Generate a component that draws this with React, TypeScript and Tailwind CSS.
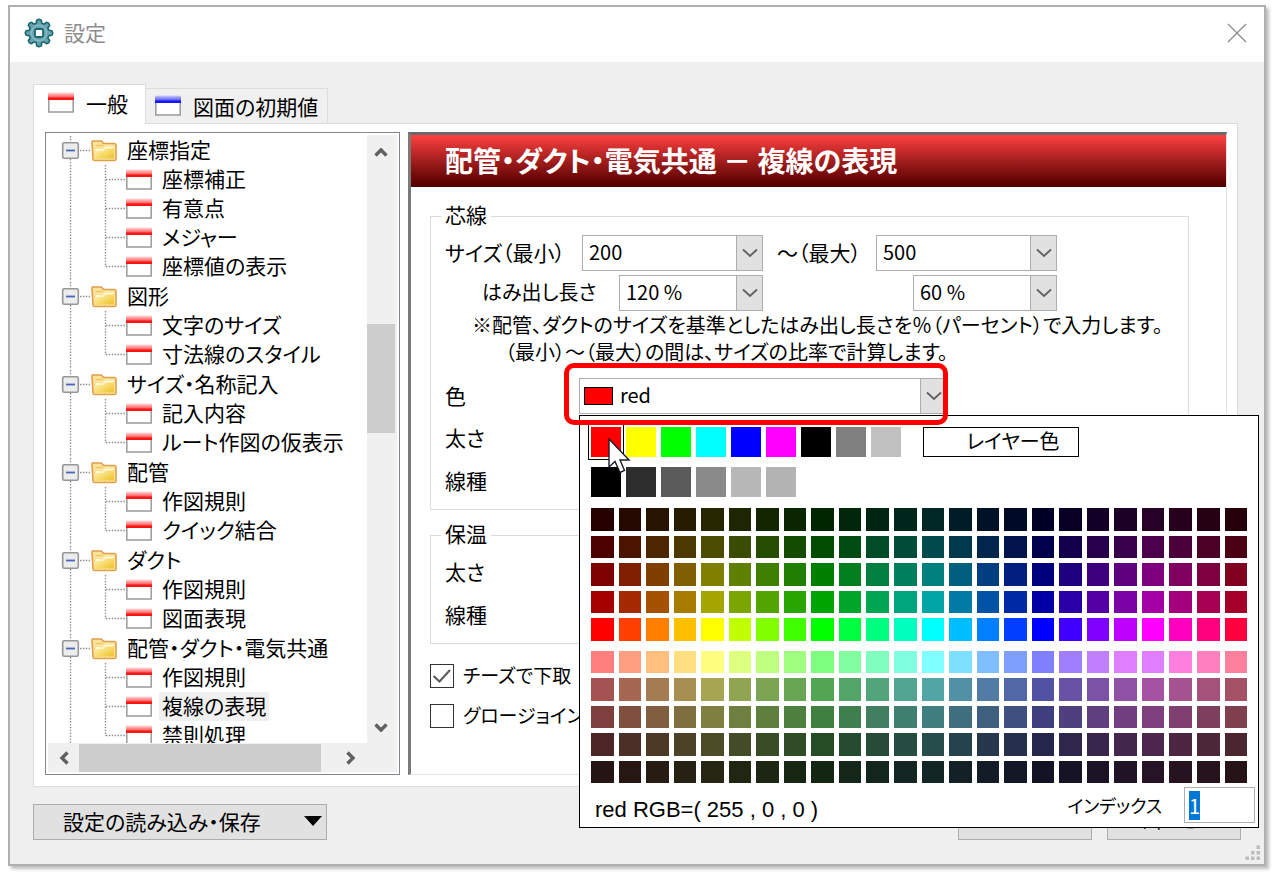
import { useEffect, useRef } from "react";

type Group = { name: string; items: string[] };

const TREE: Group[] = [
  { name: "座標指定", items: ["座標補正", "有意点", "メジャー", "座標値の表示"] },
  { name: "図形", items: ["文字のサイズ", "寸法線のスタイル"] },
  { name: "サイズ・名称記入", items: ["記入内容", "ルート作図の仮表示"] },
  { name: "配管", items: ["作図規則", "クイック結合"] },
  { name: "ダクト", items: ["作図規則", "図面表現"] },
  { name: "配管・ダクト・電気共通", items: ["作図規則", "複線の表現", "禁則処理"] },
];
const SELECTED = "複線の表現";

const BASIC = ["#ff0000", "#ffff00", "#00ff00", "#00ffff", "#0000ff", "#ff00ff", "#000000", "#808080", "#c0c0c0"];
const GRAYS = ["#000000", "#2d2d2d", "#5b5b5b", "#898989", "#b7b7b7", "#b3b3b3"];

/** Colour of one palette cell: hue in degrees, brightest and darkest channel. */
function cellColor(hue: number, max: number, min: number): string {
  const channel = (shift: number) => {
    const k = (shift + hue / 60) % 6;
    const t = Math.max(0, Math.min(k, 4 - k, 1));
    return Math.floor(max - (max - min) * t);
  };
  return `rgb(${channel(5)}, ${channel(3)}, ${channel(1)})`;
}

const HUES = Array.from({ length: 24 }, (_, i) => i * 15);
const VIVID = [38, 76, 127, 165, 255].flatMap((v) => HUES.map((h) => cellColor(h, v, 0)));
const MUTED = [255, 165, 127, 76, 38].flatMap((v) =>
  HUES.map((h) => (v === 255 && h === 300 ? "#df7fff" : cellColor(h, v, v / 2)))
);

function CardIcon({ blue = false }: { blue?: boolean }) {
  const id = blue ? "card-blue" : "card-red";
  const main = blue ? "#1414ff" : "#ff1414";
  return (
    <svg width="26" height="22" viewBox="0 0 26 22" className="shrink-0" aria-hidden="true">
      <defs>
        <linearGradient id={id} x1="0" y1="0" x2="0" y2="1">
          <stop offset="0" stopColor={main} stopOpacity="0.15" />
          <stop offset="0.65" stopColor={main} stopOpacity="0.7" />
          <stop offset="0.75" stopColor={main} />
        </linearGradient>
      </defs>
      <rect x="0.8" y="6" width="24.4" height="14" fill="#fff" stroke="#a0a0a0" strokeWidth="1.6" />
      <rect x="0" y="0.5" width="26" height="7.5" fill={`url(#${id})`} />
    </svg>
  );
}

function FolderIcon() {
  return (
    <svg width="26" height="24" viewBox="0 0 26 24" className="shrink-0" aria-hidden="true">
      <defs>
        <linearGradient id="folder" x1="0" y1="0" x2="1" y2="1">
          <stop offset="0" stopColor="#fff3c0" />
          <stop offset="0.5" stopColor="#f8dc6c" />
          <stop offset="1" stopColor="#ecc02c" />
        </linearGradient>
      </defs>
      <path d="M1.5 2 H10.5 L12.5 4.5 H23 Q25 4.5 25 6.5 V20 Q25 21.5 23.5 21.5 H3.5 Q2 21.5 2 20 L1 3 Z" fill="#fbe39a" stroke="#dfa04c" strokeWidth="1.6" />
      <path d="M4.5 11 H12 L14.5 8.5 H23 V19.5 H4.5 Z" fill="url(#folder)" />
      <path d="M4.5 11 H12 L14.5 8.5 H23" fill="none" stroke="#fffbe6" strokeWidth="1.4" />
      <path d="M4.5 6.5 H12" stroke="#f0c860" strokeWidth="1.4" />
    </svg>
  );
}

function gearPath(): string {
  const pts: string[] = [];
  for (let i = 0; i < 8; i++) {
    const mid = (i * Math.PI) / 4 - Math.PI / 2;
    for (const [r, d] of [[10.2, -0.27], [13, -0.18], [13.8, 0], [13, 0.18], [10.2, 0.27]]) {
      pts.push(`${(15 + r * Math.cos(mid + d)).toFixed(2)} ${(15 + r * Math.sin(mid + d)).toFixed(2)}`);
    }
  }
  return `M${pts.join(" L")} Z`;
}

function GearIcon() {
  return (
    <svg width="30" height="30" viewBox="0 0 30 30" aria-hidden="true">
      <path d={gearPath()} fill="#67a3ae" stroke="#1d6671" strokeWidth="1.6" strokeLinejoin="round" />
      <circle cx="15" cy="15" r="7.6" fill="none" stroke="#8dbdc6" strokeWidth="1.2" />
      <rect x="11" y="11" width="8" height="8" rx="1.5" fill="#fff" stroke="#1d6671" strokeWidth="1.8" />
    </svg>
  );
}

function Chevron({ className = "" }: { className?: string }) {
  return (
    <svg width="14" height="12" viewBox="0 0 14 12" className={className} aria-hidden="true">
      <path d="M1.5 9.5 L7 4 L12.5 9.5" fill="none" stroke="#606060" strokeWidth="3.4" />
    </svg>
  );
}

const DOTS = { stroke: "#8a8a8a", strokeWidth: 1.4, strokeDasharray: "1.4 1.5" };

function GroupBranch() {
  return (
    <svg width="43" height="29" viewBox="0 0 43 29" className="shrink-0" aria-hidden="true">
      <path d="M22.5 0 V6 M22.5 23 V29" {...DOTS} />
      <path d="M32 14.5 H42" {...DOTS} />
      <rect x="14.7" y="6.7" width="15.6" height="15.6" rx="1.5" fill="#ececec" stroke="#969696" strokeWidth="1.6" />
      <path d="M18 14.5 H27" stroke="#4a68b8" strokeWidth="1.8" />
    </svg>
  );
}

function ItemBranch({ last }: { last: boolean }) {
  return (
    <svg width="78" height="29" viewBox="0 0 78 29" className="shrink-0" aria-hidden="true">
      <path d="M22.5 0 V29" {...DOTS} />
      <path d={last ? "M57.5 0 V15" : "M57.5 0 V29"} {...DOTS} />
      <path d="M58 14.5 H77" {...DOTS} />
    </svg>
  );
}

function Tree() {
  return (
    <nav className="flex w-[355px] shrink-0 flex-col border border-[#828790] bg-white p-[2px]" aria-label="設定項目">
      <div className="flex">
        <ul className="h-[608px] min-w-0 flex-1 overflow-hidden pt-px">
          {TREE.map((g) => (
            <li key={g.name} className="pb-px">
              <div className="flex h-[29px] items-center whitespace-nowrap">
                <GroupBranch />
                <FolderIcon />
                <span className="ml-[10px] pb-[2px] leading-[27px]">{g.name}</span>
              </div>
              <ul>
                {g.items.map((it, i) => (
                  <li key={it} className="flex h-[29px] items-center whitespace-nowrap">
                    <ItemBranch last={i === g.items.length - 1} />
                    <CardIcon />
                    <a
                      href="#item"
                      className={
                        it === SELECTED
                          ? "ml-[7px] bg-[#f0f0f0] px-[3px] pb-[2px] leading-[27px]"
                          : "ml-[7px] px-[3px] pb-[2px] leading-[27px]"
                      }
                    >
                      {it}
                    </a>
                  </li>
                ))}
              </ul>
            </li>
          ))}
        </ul>
        <div className="flex w-[30px] flex-col items-center bg-[#f0f0f0] pr-[2px]">
          <div className="flex h-[34px] items-center"><Chevron /></div>
          <div className="mt-[155px] h-[109px] w-full bg-[#cdcdcd]" />
          <div className="mt-auto flex h-[30px] items-center"><Chevron className="rotate-180" /></div>
        </div>
      </div>
      <div className="flex h-[29px] items-center bg-[#f0f0f0] pr-[30px]">
        <div className="flex w-[31px] justify-center"><Chevron className="-rotate-90" /></div>
        <div className="h-[28px] w-[242px] bg-[#cdcdcd]" />
        <div className="ml-auto flex w-[32px] justify-center"><Chevron className="rotate-90" /></div>
      </div>
    </nav>
  );
}

type DropProps = { id: string; value: string; label?: string; className: string; selectClass?: string };

function Drop({ id, value, label, className, selectClass = "pl-[6px]" }: DropProps) {
  return (
    <div className={`grid h-[36px] ${className}`}>
      <select
        id={id}
        aria-label={label}
        className={`col-start-1 row-start-1 w-full appearance-none border border-[#abadb3] bg-white pb-[2px] text-[20px] leading-[30px] outline-none ${selectClass}`}
      >
        <option>{value}</option>
      </select>
      <span className="pointer-events-none col-start-1 row-start-1 flex w-[27px] items-center justify-center justify-self-end border border-[#adadad] bg-[#e1e1e1]">
        <svg width="16" height="10" viewBox="0 0 16 10" aria-hidden="true">
          <path d="M1 1.5 L8 8 L15 1.5" fill="none" stroke="#606060" strokeWidth="1.8" />
        </svg>
      </span>
    </div>
  );
}

function Cells({ colors }: { colors: string[] }) {
  return (
    <div className="grid grid-cols-[repeat(24,1fr)] gap-[5px]">
      {colors.map((c, i) => (
        <button key={i} type="button" aria-label={c} className="aspect-square" style={{ backgroundColor: c }} />
      ))}
    </div>
  );
}

function ColorPopup() {
  const index = useRef<HTMLInputElement>(null);
  useEffect(() => {
    index.current?.focus();
    index.current?.select();
  }, []);
  return (
    <div className="absolute top-full left-0 z-20 mt-px w-[680px] border border-black bg-white pt-[11px]">
      <div className="pr-[11px] pl-[11px]">
        <div className="flex items-center gap-[5px]">
          {BASIC.map((c, i) => (
            <button
              key={c}
              type="button"
              aria-label={c}
              className={i === 0 ? "h-[30px] w-[30px] outline-1 outline-offset-2 outline-black" : "h-[30px] w-[30px]"}
              style={{ backgroundColor: c }}
            />
          ))}
          <button
            type="button"
            className="ml-[17px] h-[30px] w-[156px] border border-black pb-[2px] pl-[24px] text-[20px] leading-[26px]"
          >
            レイヤー色
          </button>
        </div>
        <div className="mt-[10px] flex gap-[5px]">
          {GRAYS.map((c) => (
            <button key={c} type="button" aria-label={c} className="h-[30px] w-[30px]" style={{ backgroundColor: c }} />
          ))}
        </div>
        <div className="mt-[11px] flex flex-col gap-[10px]">
          <Cells colors={VIVID} />
          <Cells colors={MUTED} />
        </div>
      </div>
      <div className="flex items-center pt-[4px] pr-[3px] pb-[4px] pl-[15px]">
        <span className="pt-[10px] font-['Liberation_Sans',sans-serif] text-[22px] leading-[26px] whitespace-nowrap">
          red RGB=( 255 , 0 , 0 )
        </span>
        <label htmlFor="color-index" className="ml-auto text-[18px] leading-[36px]">
          インデックス
        </label>
        <input
          id="color-index"
          ref={index}
          defaultValue="1"
          className="ml-[22px] h-[36px] w-[71px] border border-[#abadb3] px-[4px] text-[20px] leading-[24px] outline-none selection:bg-[#0078d7] selection:text-white"
        />
      </div>
      <svg width="24" height="38" viewBox="0 0 24 38" className="absolute top-[22px] left-[28px]" aria-hidden="true">
        <path
          d="M1 1 V29 L7 23.5 L12 34.5 L16.5 32.5 L12 22 H21 Z"
          fill="#fff"
          stroke="#1a1a2e"
          strokeWidth="1.4"
        />
      </svg>
    </div>
  );
}

function LineRows({ prefix }: { prefix: string }) {
  return (
    <>
      {["太さ", "線種"].map((t) => (
        <div key={t} className="flex h-[43px] items-center">
          <label htmlFor={prefix + t} className="w-[134px] pb-[3px]">
            {t}
          </label>
          <Drop id={prefix + t} value="" className="w-[368px]" />
        </div>
      ))}
    </>
  );
}

function Check({ id, label, checked }: { id: string; label: string; checked: boolean }) {
  return (
    <div className="flex h-[40px] items-center">
      <span className="grid">
        <input
          id={id}
          type="checkbox"
          defaultChecked={checked}
          className="peer col-start-1 row-start-1 h-[24px] w-[24px] appearance-none border border-[#333] bg-white"
        />
        <svg
          width="24"
          height="24"
          viewBox="0 0 24 24"
          className="pointer-events-none invisible col-start-1 row-start-1 peer-checked:visible"
          aria-hidden="true"
        >
          <path d="M3.5 12 L9.5 17.5 L20 6" fill="none" stroke="#5a5a5a" strokeWidth="2" />
        </svg>
      </span>
      <label htmlFor={id} className="ml-[9px] pb-[3px] text-[19px]">
        {label}
      </label>
    </div>
  );
}

function Detail() {
  return (
    <section className="min-w-0 flex-1 border-t-3 border-r border-b border-l-3 border-t-[#696969] border-r-[#e3e3e3] border-b-[#e3e3e3] border-l-[#7a7a7a] bg-white">
      <h1 className="h-[52px] bg-linear-to-b from-[#ff4040] to-[#500000] pl-[34px] text-[28px] leading-[50px] font-bold whitespace-nowrap text-white">
        配管・ダクト・電気共通 － 複線の表現
      </h1>
      <div className="pt-[17px] pr-[37px] pl-[19px]">
        <fieldset className="border border-[#dcdcdc] pb-[6px]">
          <legend className="ml-[10px] px-1 pb-[3px] leading-[21px]">芯線</legend>
          <div className="flex flex-col pt-[7px] pl-[14px] whitespace-nowrap">
            <div className="flex items-center">
              <label htmlFor="size-min" className="w-[137px] pb-[3px]">
                サイズ（最小）
              </label>
              <Drop id="size-min" value="200" className="w-[181px]" />
              <label htmlFor="size-max" className="ml-[14px] w-[99px] pb-[3px]">
                ～（最大）
              </label>
              <Drop id="size-max" value="500" className="w-[181px]" />
            </div>
            <div className="mt-1 flex items-center pl-[37px]">
              <label htmlFor="over-min" className="w-[137px] pb-[3px] text-[20px]">
                はみ出し長さ
              </label>
              <Drop id="over-min" value="120 %" className="w-[144px]" />
              <Drop id="over-max" label="はみ出し長さ（最大）" value="60 %" className="ml-[150px] w-[144px]" />
            </div>
            <div className="text-[20px] leading-[27px]">
              <p className="pl-[27px]">
                ※配管、ダクトのサイズを基準としたはみ出し長さを％（パーセント）で入力します。
              </p>
              <p className="pl-[60px]">（最小）～（最大）の間は、サイズの比率で計算します。</p>
            </div>
            <div className="mt-[13px] mb-[3px] flex items-center">
              <label htmlFor="color" className="w-[134px] pb-[3px]">
                色
              </label>
              <div className="relative">
                <Drop id="color" value="red" className="w-[368px]" selectClass="pl-[40px]" />
                <span className="pointer-events-none absolute top-[9px] left-[5px] h-[18px] w-[29px] border border-black bg-[#ff0000]" />
                <ColorPopup />
                <span className="pointer-events-none absolute -top-[15px] -right-[1px] -bottom-[11px] -left-[15px] z-30 rounded-[10px] border-[5px] border-[#ff0000]" />
              </div>
            </div>
            <LineRows prefix="core-" />
          </div>
        </fieldset>
        <fieldset className="mt-[13px] border border-[#dcdcdc] pb-[6px]">
          <legend className="ml-[10px] px-1 pb-[3px] leading-[21px]">保温</legend>
          <div className="pt-[4px] pl-[14px]">
            <LineRows prefix="insulation-" />
          </div>
        </fieldset>
        <div className="mt-[12px]">
          <Check id="tee" label="チーズで下取" checked />
          <Check id="globe" label="グロージョイン" checked={false} />
        </div>
      </div>
    </section>
  );
}

export default function App() {
  return (
    <div className="bg-white pt-[5px] pr-2 pb-[7px] pl-2 font-['Noto_Sans_CJK_JP',sans-serif] text-[21px] leading-[28px] text-black [font-feature-settings:'palt']">
      <div className="relative border-2 border-[#b0b0b0] bg-[#efefef] shadow-[3px_3px_3px_0px_rgba(0,0,0,0.25)]">
        <header className="flex h-[55px] items-center bg-white pr-[17px] pb-[3px] pl-[14px]">
          <GearIcon />
          <span className="ml-[10px] pb-[2px] text-[#8c8c8c]">設定</span>
          <button type="button" aria-label="閉じる" className="ml-auto">
            <svg width="20" height="20" viewBox="0 0 20 20" aria-hidden="true">
              <path d="M1 1 L19 19 M19 1 L1 19" stroke="#8c8c8c" strokeWidth="1.3" />
            </svg>
          </button>
        </header>
        <main className="pt-[22px] pr-[23px] pb-[24px] pl-[23px]">
          <div className="flex items-end" role="tablist">
            <button
              type="button"
              role="tab"
              aria-selected="true"
              className="z-10 -mb-px flex h-[40px] w-[113px] items-center gap-[12px] border border-b-0 border-[#dcdcdc] bg-white pb-[4px] pl-[14px]"
            >
              <CardIcon />
              一般
            </button>
            <button
              type="button"
              role="tab"
              aria-selected="false"
              className="flex h-[35px] items-center gap-[12px] border border-b-0 border-l-0 border-[#dcdcdc] bg-[#f0f0f0] pr-[9px] pb-px pl-[9px]"
            >
              <CardIcon blue />
              図面の初期値
            </button>
          </div>
          <div className="mr-[3px] flex gap-[8px] border border-[#dcdcdc] bg-white pt-[8px] pr-[10px] pb-[11px] pl-[11px]">
            <Tree />
            <Detail />
          </div>
          <div className="mt-[17px] flex items-center gap-[15px]">
            <button
              type="button"
              className="mr-auto flex h-[36px] w-[294px] items-center justify-between border border-[#adadad] bg-[#e1e1e1] pr-[4px] pb-[3px] pl-[29px] whitespace-nowrap"
            >
              設定の読み込み・保存
              <svg width="18" height="10" viewBox="0 0 18 10" aria-hidden="true">
                <path d="M0 0 H18 L9 10 Z" fill="#000" />
              </svg>
            </button>
            <button
              type="button"
              className="h-[36px] w-[134px] border border-[#adadad] bg-[#e1e1e1] pb-[3px] text-[17px] leading-[20px]"
            >
              OK
            </button>
            <button
              type="button"
              className="h-[36px] w-[134px] border border-[#adadad] bg-[#e1e1e1] pb-[3px] text-[17px] leading-[20px]"
            >
              キャンセル
            </button>
          </div>
        </main>
        <svg width="16" height="16" viewBox="0 0 16 16" className="absolute right-[3px] bottom-[3px]" aria-hidden="true">
          <path
            d="M11.5 0.5h3.5v3.5h-3.5z M6 6h3.5v3.5h-3.5z M11.5 6h3.5v3.5h-3.5z M0.5 11.5h3.5v3.5h-3.5z M6 11.5h3.5v3.5h-3.5z M11.5 11.5h3.5v3.5h-3.5z"
            fill="#bdbdbd"
          />
        </svg>
      </div>
    </div>
  );
}
